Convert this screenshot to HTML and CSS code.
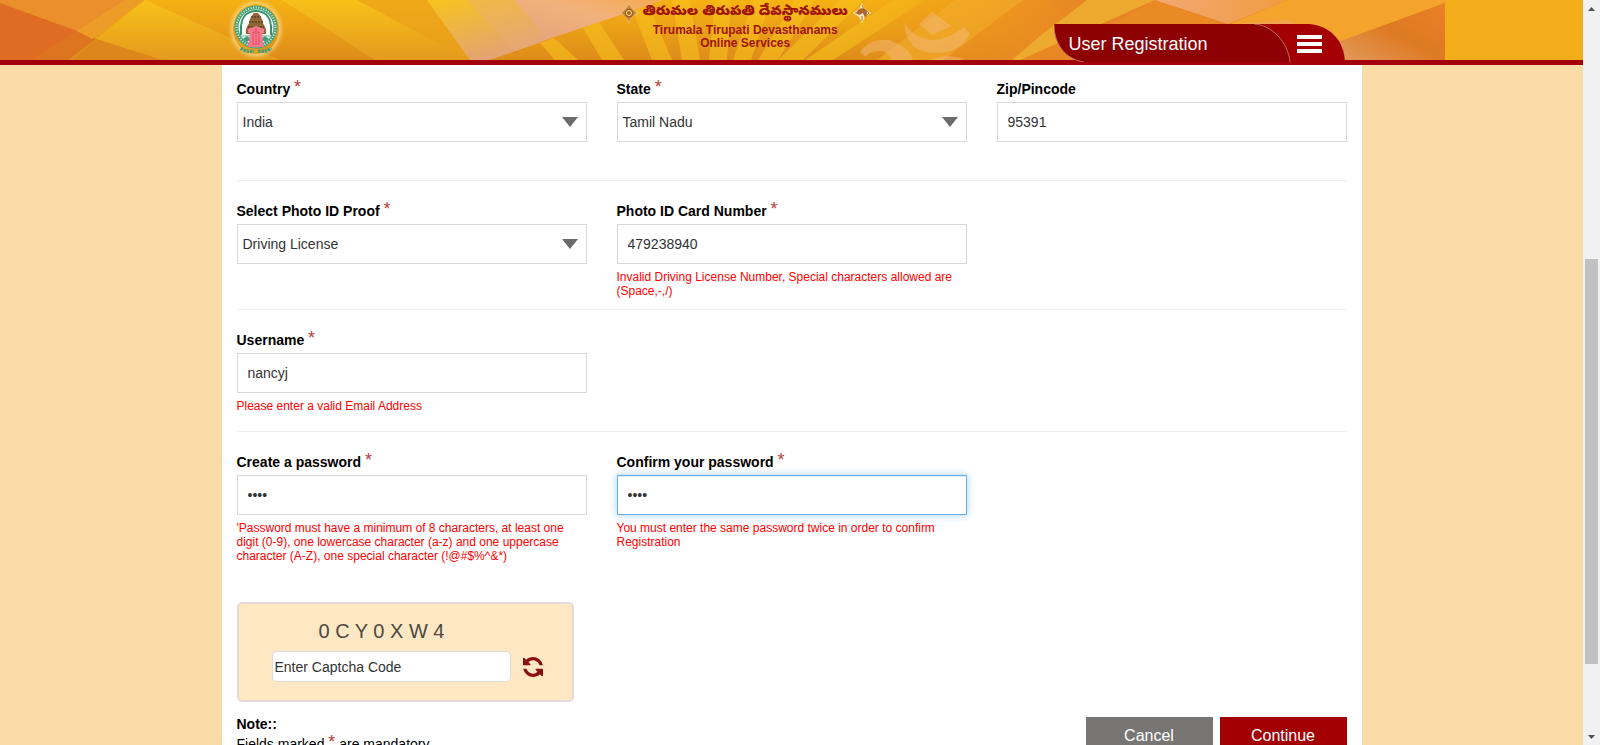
FILE: index.html
```html
<!DOCTYPE html>
<html lang="en">
<head>
<meta charset="utf-8">
<title>User Registration</title>
<link rel="stylesheet" href="styles.css">
</head>
<body>
<div class="window">
  <div class="page">
    <header class="header">
      <svg class="header-art" viewBox="0 0 1445 60" preserveAspectRatio="none" aria-hidden="true">
        <defs>
          <linearGradient id="base" x1="0" y1="0" x2="0" y2="1"><stop offset="0" stop-color="#f6b212"/><stop offset="1" stop-color="#dd8c1b"/></linearGradient>
          <linearGradient id="gold" x1="0" y1="0" x2="0" y2="1"><stop offset="0" stop-color="#f7c119"/><stop offset="1" stop-color="#e59a1e"/></linearGradient>
          <linearGradient id="pink" x1="0" y1="0" x2=".6" y2="1"><stop offset="0" stop-color="#f8c41c"/><stop offset="1" stop-color="#e2a07a"/></linearGradient>
          <linearGradient id="blush" x1="0" y1="1" x2="1" y2="0"><stop offset="0" stop-color="#e4a27c"/><stop offset=".6" stop-color="#f2b27c"/><stop offset="1" stop-color="#f5a94f"/></linearGradient>
          <linearGradient id="side" x1="0" y1="0" x2="1" y2="0"><stop offset="0" stop-color="#f0931f" stop-opacity="0"/><stop offset=".4" stop-color="#e88426"/><stop offset="1" stop-color="#e9822a"/></linearGradient>
          <linearGradient id="peach" x1="0" y1="0" x2="1" y2="0"><stop offset="0" stop-color="#f3a873"/><stop offset="1" stop-color="#f09c40"/></linearGradient>
          <linearGradient id="end" x1="0" y1="1" x2="1" y2="0"><stop offset="0" stop-color="#e29a5c"/><stop offset=".5" stop-color="#de7a24"/><stop offset="1" stop-color="#ea8026"/></linearGradient>
        </defs>
        <rect width="1445" height="60" fill="url(#base)"/>
        <path d="M0 0h145L33 60H0z" fill="#ea8f2b"/>
        <path d="M0 3L77 31 33 60H0z" fill="#e06c24"/>
        <path d="M77 31l19 8-28 21H33z" fill="#dd7420"/>
        <path d="M125 0h20L92 39 77 31z" fill="#ee9c28"/>
        <path d="M145 0L96 39l66 21h118z" fill="url(#gold)"/>
        <path d="M96 39l66 21H73z" fill="#dd861c"/>
        <path d="M282 0h75l113 60h-95z" fill="url(#gold)"/>
        <path d="M357 0h70l63 60h-20z" fill="#eca51b" opacity=".7"/>
        <path d="M427 0h130l-17 43-50 17h-20z" fill="url(#pink)"/>
        <path d="M467 0h48l25 31v10l-25 10z" fill="#ecae7c" opacity=".35"/>
        <path d="M515 0h150L540 42V31z" fill="url(#blush)"/>
        <path d="M665 0L490 60h590L1110 0z" fill="url(#base)"/>
        <g fill="#f8c01d" opacity=".6">
          <path d="M540 43l14-5 24 22h-23z"/><path d="M583 28l16-6 25 38h-22z"/><path d="M633 11l16-5 23 54h-20z"/>
          <path d="M672 0h18l10 60h-18z"/><path d="M715 0h16l-4 60h-18z"/><path d="M753 0h18l-20 60h-18z"/>
          <path d="M795 0h20l-37 60h-20z"/><path d="M840 0h24l-61 60h-25z"/><path d="M893 0h32l-92 60h-28z"/>
        </g>
        <rect x="850" width="595" height="60" fill="url(#side)"/>
        <path d="M955 0h68l-80 60h-66z" fill="#f1ad2c" opacity=".6"/>
        <path d="M1087 0h68l-135 60h-8l28-24z" fill="#eea92f"/>
        <path d="M1155 0l-55 30h140z" fill="#e98a24"/>
        <path d="M1155 0h133l-60 24z" fill="url(#peach)"/>
        <path d="M1288 0h157v3L1340 42l-110-18z" fill="#f4a42c"/>
        <path d="M1235 24l53-4 52 22-6 18z" fill="#f0a552"/>
        <path d="M1445 3v57H1338V42z" fill="url(#end)"/>
        <g fill="#f4b97a" opacity=".5">
          <path d="M932 12l19 14-19 9-13-11z"/>
          <path d="M905 22c5 14 21 20 35 17 12-3 19-8 24-12l6 7c-6 13-20 20-36 19-18-1-30-11-29-31z"/>
          <path d="M860 52c8-11 22-15 34-10 10 4 17 10 19 18h-22c-2-7-6-9-12-9-7 0-12 3-13 6z"/>
          <path d="M931 60c8-5 25-5 34 0z"/>
        </g>
      </svg>
      <div class="header-inner">
        <a class="logo" href="#" aria-label="Tirumala Tirupati Devasthanams home">
          <svg viewBox="0 0 46 50" aria-hidden="true">
            <circle cx="23" cy="23" r="21" fill="#fff"/>
            <circle cx="23" cy="23" r="19.500" fill="none" stroke="#47a07c" stroke-width="4"/>
            <circle cx="23" cy="23" r="19.500" fill="none" stroke="#d9ecd4" stroke-width="2" stroke-dasharray="1 1.600"/>
            <path d="M8 31V22C9 12 15 7 23 7s14 5 15 15v9" fill="none" stroke="#379268" stroke-width="2"/>
            <path d="M13 30c-1-6 2-8 3-11 1-5 3-8 5-10h4c2 2 4 5 5 10 1 3 4 5 3 11z" fill="#936638"/>
            <path d="M18 13h10M16 18h14M15 23h16" stroke="#5a4329" stroke-width="1.500" stroke-dasharray="2 1"/>
            <path d="M8 32h30" stroke="#5fae8a"/>
            <path d="M10 35l4-3 4 3-4 3zM28 35l4-3 4 3-4 3z" fill="#3f9b77"/>
            <path d="M15 25l8-3 8 3v4h-2l2 14H15l2-14h-2z" fill="#f7788b"/>
            <path d="M20 28h6v12h-6zM23 24v16" fill="none" stroke="#e2516c"/>
            <path d="M8 44c3 3 7 4 13 3m4 0c6 1 10 0 13-3" fill="none" stroke="#4b9f75" stroke-width="3.500" stroke-dasharray="2.500 .8"/>
          </svg>
        </a>
        <div class="brand">
          <div class="brand-local">
            <svg class="emblem" viewBox="0 0 18 20" aria-hidden="true"><path d="M9 0l3 6 6 4-6 4-3 6-3-6-6-4 6-4z" fill="#f6d9a0"/><path d="M9 1l3 5 5 4-5 4-3 5-3-5-5-4 5-4z" fill="#c98a3c"/><circle cx="9" cy="10" r="4.500" fill="#a9621d"/><circle cx="9" cy="10" r="2.500" fill="none" stroke="#fbe3a0"/></svg>
            <span lang="te">తిరుమల తిరుపతి దేవస్థానములు</span>
            <svg class="emblem" viewBox="0 0 18 20" aria-hidden="true"><path d="M9 0l3 6 6 4-6 4-3 6-3-6-6-4 6-4z" fill="#fae5c2"/><path d="M3 10c2-4 5-6 9-4 3 2 2 6 0 9l-2-5-4 2z" fill="#a8672d"/><path d="M9 2l2 4M9 18v-5M2 10h4M13 7l3 3-3 3" fill="none" stroke="#b97831"/></svg>
          </div>
          <div class="brand-name">Tirumala Tirupati Devasthanams</div>
          <div class="brand-name">Online Services</div>
        </div>
        <div class="tab">
          <svg class="tab-shape" viewBox="0 0 291 38" preserveAspectRatio="none" aria-hidden="true">
            <path d="M190 0h65c22 2 35 17 36 38h-91z" fill="#a40004"/>
            <path d="M0 0h200c18 1 34 18 36 38H30C11 35 0 20 0 0z" fill="#8d0004"/>
            <path d="M200 0c18 1 34 18 36 38M0 0c0 20 11 35 30 38" fill="none" stroke="#bc6b62"/>
          </svg>
          <h1 class="tab-title">User Registration</h1>
          <button class="menu" type="button" aria-label="Menu"><span></span><span></span><span></span></button>
        </div>
      </div>
    </header>

    <main class="content">
      <form class="form">
        <section class="row">
          <div class="field">
            <label for="country">Country <sup>*</sup></label>
            <div class="select"><select id="country"><option>India</option></select></div>
            <p class="error"></p>
          </div>
          <div class="field">
            <label for="state">State <sup>*</sup></label>
            <div class="select"><select id="state"><option>Tamil Nadu</option></select></div>
            <p class="error"></p>
          </div>
          <div class="field">
            <label for="zip">Zip/Pincode</label>
            <input id="zip" type="text" value="95391">
            <p class="error"></p>
          </div>
        </section>
        <section class="row">
          <div class="field">
            <label for="proof">Select Photo ID Proof <sup>*</sup></label>
            <div class="select"><select id="proof"><option>Driving License</option></select></div>
            <p class="error"></p>
          </div>
          <div class="field">
            <label for="card">Photo ID Card Number <sup>*</sup></label>
            <input id="card" type="text" value="479238940">
            <p class="error">Invalid Driving License Number, Special characters allowed are (Space,-,/)</p>
          </div>
        </section>
        <section class="row">
          <div class="field">
            <label for="username">Username <sup>*</sup></label>
            <input id="username" type="text" value="nancyj">
            <p class="error">Please enter a valid Email Address</p>
          </div>
        </section>
        <section class="row">
          <div class="field">
            <label for="password">Create a password <sup>*</sup></label>
            <input id="password" type="password" value="abcd">
            <p class="error">'Password must have a minimum of 8 characters, at least one digit (0-9), one lowercase character (a-z) and one uppercase character (A-Z), one special character (!@#$%^&amp;*)</p>
          </div>
          <div class="field">
            <label for="confirm">Confirm your password <sup>*</sup></label>
            <input id="confirm" class="active" type="password" value="abcd">
            <p class="error">You must enter the same password twice in order to confirm Registration</p>
          </div>
        </section>

        <div class="captcha">
          <div class="captcha-code">0 C Y 0 X W 4</div>
          <div class="captcha-entry">
            <input type="text" placeholder="Enter Captcha Code" aria-label="Enter Captcha Code">
            <button type="button" class="refresh" aria-label="Refresh captcha">
              <svg viewBox="0 0 1536 1536" aria-hidden="true">
                <path transform="translate(1536) scale(-1 1)" fill="#8a0f10" d="M1511 928q0 5-1 7-64 268-268 434.500t-478 166.500q-146 0-282.500-55t-243.500-157l-129 129q-19 19-45 19t-45-19-19-45v-448q0-26 19-45t45-19h448q26 0 45 19t19 45-19 45l-137 137q71 66 161 102t187 36q134 0 250-65t186-179q11-17 53-117 8-23 30-23h192q13 0 22.500 9.500t9.500 22.500zm25-800v448q0 26-19 45t-45 19h-448q-26 0-45-19t-19-45 19-45l138-138q-148-137-349-137-134 0-250 65t-186 179q-11 17-53 117-8 23-30 23h-199q-13 0-22.500-9.500t-9.500-22.500v-7q65-268 270-434.500t480-166.500q146 0 284 55.500t245 156.500l130-129q19-19 45-19t45 19 19 45z"/>
              </svg>
            </button>
          </div>
        </div>

        <div class="footer">
          <div class="note">
            <strong>Note::</strong>
            <p>Fields marked <sup>*</sup> are mandatory</p>
          </div>
          <div class="actions">
            <button type="button" class="btn cancel">Cancel</button>
            <button type="submit" class="btn continue">Continue</button>
          </div>
        </div>
      </form>
    </main>
  </div>
  <div class="scrollbar" aria-hidden="true">
    <svg viewBox="0 0 17 17"><path d="M5 11h7L8.500 7z" fill="#505050"/></svg>
    <div class="track"><div class="thumb"></div></div>
    <svg viewBox="0 0 17 17"><path d="M5 7h7l-3.500 4z" fill="#505050"/></svg>
  </div>
</div>
</body>
</html>
```

FILE: styles.css
```css
* { box-sizing: border-box; }

body {
  margin: 0;
  font: 14px/20px "Liberation Sans", Arial, sans-serif;
  color: #000;
  background: #f9dba7;
}

p, h1 { margin: 0; }

input, select, button { font: inherit; }

.window {
  display: grid;
  grid-template-columns: 1fr 17px;
  height: 100vh;
  overflow: hidden;
}

.page {
  min-width: 0;
  min-height: 0;
  overflow: hidden;
}

.header {
  position: relative;
  height: 65px;
  background: #f3ad1b;
  border-bottom: 5px solid #a3000b;
}

.header-art {
  position: absolute;
  inset: 0 auto auto 0;
  width: 1445px;
  height: 60px;
}

.header-inner {
  position: relative;
  display: grid;
  grid-template-columns: 35% 1fr auto;
  max-width: 1140px;
  margin: 0 auto;
  padding-right: 17px;
}

.logo {
  width: 46px;
  height: 50px;
  margin: 4px 0 0 11px;
  border-radius: 50%;
  box-shadow: 0 0 4px 2px #f8d88a;
}

.logo svg { display: block; }

.brand {
  justify-self: start;
  padding-left: 5px;
  text-align: center;
  color: #a01408;
}

.brand-local {
  display: flex;
  align-items: center;
  gap: 5px;
  height: 24px;
  padding-top: 2px;
  font: 900 14px/24px "Noto Sans Telugu", "Liberation Sans", sans-serif;
  white-space: nowrap;
}

.emblem {
  flex: none;
  width: 18px;
  height: 20px;
}

.brand-name {
  font-weight: bold;
  font-size: 12px;
  line-height: 13px;
}

.tab {
  position: relative;
  display: flex;
  justify-content: space-between;
  align-items: center;
  width: 291px;
  height: 38px;
  margin-top: 24px;
  padding: 2px 23px 0 15px;
}

.tab-shape {
  position: absolute;
  inset: 0;
  width: 100%;
  height: 100%;
}

.tab-title {
  position: relative;
  font-size: 18px;
  font-weight: normal;
  color: #fff;
}

.menu {
  position: relative;
  display: grid;
  gap: 3px;
  width: 25px;
  padding: 0;
  border: 0;
  background: none;
}

.menu span {
  height: 4px;
  background: #fff;
}

.content {
  max-width: 1140px;
  margin: 0 auto;
  padding: 0 15px 40px;
  background: #fff;
}

.row {
  display: grid;
  grid-template-columns: repeat(3, 1fr);
  gap: 30px;
  padding: 15px 0 11px;
  border-bottom: 1px solid #eee;
}

.row:first-child { padding-top: 9px; }

.row:nth-child(4) { border-bottom: 0; }

.field label {
  display: block;
  height: 28px;
  line-height: 30px;
  font-weight: bold;
}

sup {
  font-size: 18px;
  font-weight: normal;
  line-height: 0;
  vertical-align: 1px;
  color: #b5403a;
}

.field input, .field select {
  display: block;
  width: 100%;
  height: 40px;
  padding: 0 10px;
  border: 1px solid #d8d8d8;
  border-radius: 0;
  background: #fff;
  color: #333;
  outline: 0;
}

.field select {
  padding: 0 40px 0 5px;
  appearance: none;
}

.select { position: relative; }

.select::after {
  content: "";
  position: absolute;
  top: 15px;
  right: 9px;
  border: 8px solid transparent;
  border-top: 10px solid #6b6b6b;
  border-bottom: 0;
  pointer-events: none;
}

.field .active {
  border-color: #66afe9;
  box-shadow: inset 0 1px 1px rgba(0, 0, 0, .08), 0 0 8px rgba(102, 175, 233, .6);
}

.error {
  min-height: 21px;
  margin-top: 6px;
  font-size: 12px;
  line-height: 14px;
  color: #f00;
}

.captcha {
  width: 337px;
  height: 100px;
  margin-top: 28px;
  padding: 15px 16px 0 33px;
  border: 2px solid #e4dadc;
  border-radius: 5px;
  background: #fee8c4;
}

.captcha-code {
  padding-left: 47px;
  font-size: 20px;
  line-height: 24px;
  color: #4d483f;
}

.captcha-entry {
  display: flex;
  align-items: center;
  gap: 12px;
  margin-top: 8px;
}

.captcha-entry input {
  width: 239px;
  height: 31px;
  padding: 0 2px;
  border: 1px solid #dcdcdc;
  border-radius: 5px;
  background: #fff;
}

.captcha-entry input::placeholder { color: #333; }

.refresh {
  width: 20px;
  height: 20px;
  padding: 0;
  border: 0;
  background: none;
}

.refresh svg { display: block; }

.footer {
  display: flex;
  justify-content: space-between;
  align-items: flex-start;
  margin-top: 12px;
}

.actions {
  display: flex;
  gap: 7px;
  padding-top: 3px;
}

.btn {
  width: 127px;
  height: 38px;
  border: 0;
  font-size: 16px;
  color: #fff;
}

.cancel { background: #777674; }

.continue { background: #a30004; }

.scrollbar {
  display: flex;
  flex-direction: column;
  background: #f1f1f1;
}

.scrollbar svg {
  flex: none;
  height: 17px;
}

.track {
  flex: 1;
  padding: 0 2px;
}

.thumb {
  height: 57%;
  margin-top: 242px;
  background: #c1c1c1;
}
```
